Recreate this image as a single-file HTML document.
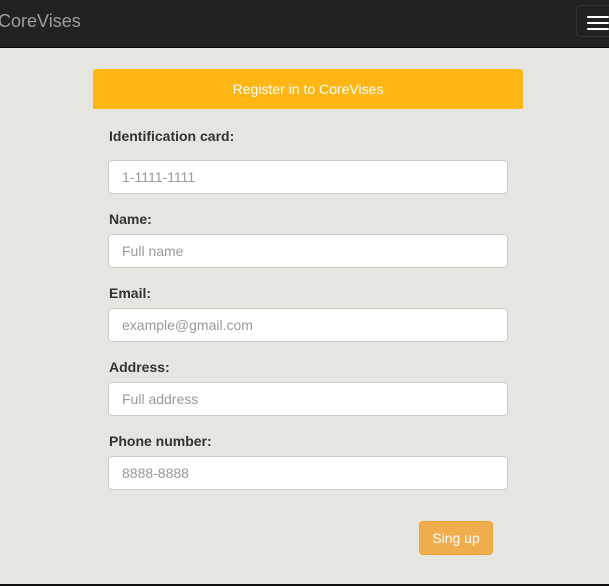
<!DOCTYPE html>
<html><head><style>
body{margin:0;width:609px;height:586px;background:#e5e6e0;font-family:"Liberation Sans",sans-serif;position:relative;overflow:hidden}
.nav{position:absolute;left:0;top:0;width:609px;height:47px;background:#222;border-bottom:1px solid #080808}
.brand{position:absolute;left:-2px;top:11px;font-size:18px;color:#9d9d9d}
.tog{position:absolute;left:576px;top:5px;width:40px;height:32px;border:1px solid #333;border-radius:4px;box-sizing:border-box}
.tog i{position:absolute;left:10px;width:22px;height:2px;background:#fff;border-radius:1px}
.hdr{position:absolute;left:93px;top:69px;width:430px;height:40px;background:#fdb614;border-radius:3px 3px 0 0;color:#fff;font-size:14px;text-align:center;line-height:40px}
.lbl{position:absolute;left:109px;font-size:14px;font-weight:bold;color:#333}
.in{position:absolute;left:108px;width:400px;height:34px;box-sizing:border-box;background:#fff;border:1px solid #ccc;border-radius:4px;font-size:14px;color:#999;padding-left:13px;line-height:32px}
.btn{position:absolute;left:419px;top:521px;width:74px;height:34px;box-sizing:border-box;background:#f0ad4e;border:1px solid #eea236;border-radius:4px;color:#fff;font-size:14px;text-align:center;line-height:32px}
.bot{position:absolute;left:0;top:584px;width:609px;height:2px;background:#111}
</style></head><body>
<div class="nav"><div class="brand">CoreVises</div><div class="tog"><i style="top:10px"></i><i style="top:16px"></i><i style="top:22px"></i></div></div>
<div class="hdr">Register in to CoreVises</div>
<div class="lbl" style="top:128px">Identification card:</div>
<div class="in" style="top:160px">1-1111-1111</div>
<div class="lbl" style="top:211px">Name:</div>
<div class="in" style="top:234px">Full name</div>
<div class="lbl" style="top:285px">Email:</div>
<div class="in" style="top:308px">example@gmail.com</div>
<div class="lbl" style="top:359px">Address:</div>
<div class="in" style="top:382px">Full address</div>
<div class="lbl" style="top:433px">Phone number:</div>
<div class="in" style="top:456px">8888-8888</div>
<div class="btn">Sing up</div>
<div class="bot"></div>
</body></html>
